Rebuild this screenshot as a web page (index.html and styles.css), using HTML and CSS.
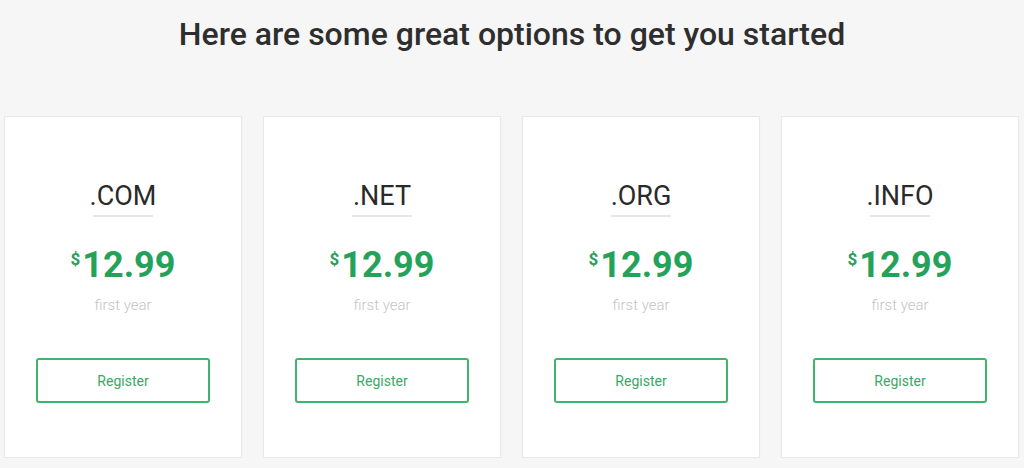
FILE: index.html
```html
<!DOCTYPE html>
<html>
<head>
<meta charset="utf-8">
<link rel="stylesheet" href="styles.css">
</head>
<body>
<h1 class="title">Here are some great options to get you started</h1>
<div class="cards">
  <div class="card">
    <div class="tld">.COM</div>
    <div class="price"><span class="cur">$</span>12.99</div>
    <div class="term">first year</div>
    <a class="btn">Register</a>
  </div>
  <div class="card">
    <div class="tld">.NET</div>
    <div class="price"><span class="cur">$</span>12.99</div>
    <div class="term">first year</div>
    <a class="btn">Register</a>
  </div>
  <div class="card">
    <div class="tld">.ORG</div>
    <div class="price"><span class="cur">$</span>12.99</div>
    <div class="term">first year</div>
    <a class="btn">Register</a>
  </div>
  <div class="card">
    <div class="tld">.INFO</div>
    <div class="price"><span class="cur">$</span>12.99</div>
    <div class="term">first year</div>
    <a class="btn">Register</a>
  </div>
</div>
</body>
</html>
```
FILE: styles.css
```css
html, body {
  margin: 0;
  padding: 0;
  background: #f6f6f6;
  font-family: Roboto, "Liberation Sans", sans-serif;
}
.title {
  margin: 0;
  padding-top: 14px;
  height: 116px;
  box-sizing: border-box;
  text-align: center;
  font-size: 32px;
  line-height: 40px;
  font-weight: 500;
  color: #2e2e2e;
}
.cards {
  display: flex;
  gap: 21px;
  padding: 0 5px 0 4px;
}
.card {
  flex: 0 0 238px;
  height: 342px;
  box-sizing: border-box;
  background: #fff;
  border: 1px solid #e8e8e8;
  box-shadow: 0 1px 2px rgba(0, 0, 0, 0.03);
  display: flex;
  flex-direction: column;
  align-items: center;
  padding-top: 61px;
}
.tld {
  font-size: 27px;
  line-height: 36px;
  color: #2a2a2a;
  text-align: center;
  display: flex;
  flex-direction: column;
  align-items: center;
}
.tld::after {
  content: "";
  display: block;
  width: 60px;
  height: 2px;
  margin-top: 1px;
  background: #e6e6e6;
}
.price {
  margin-top: 26px;
  font-size: 36px;
  line-height: 44px;
  font-weight: 700;
  color: #25a25a;
}
.cur {
  font-size: 17px;
  vertical-align: top;
  line-height: 33px;
  margin-right: 2px;
}
.term {
  margin-top: 8px;
  font-size: 15px;
  line-height: 20px;
  font-weight: 300;
  color: #c4c4c4;
}
.btn {
  margin-top: 43px;
  width: 174px;
  height: 45px;
  box-sizing: border-box;
  border: 2px solid #3db56c;
  border-radius: 3px;
  display: flex;
  align-items: center;
  justify-content: center;
  font-size: 14px;
  color: #3aa866;
}
```
